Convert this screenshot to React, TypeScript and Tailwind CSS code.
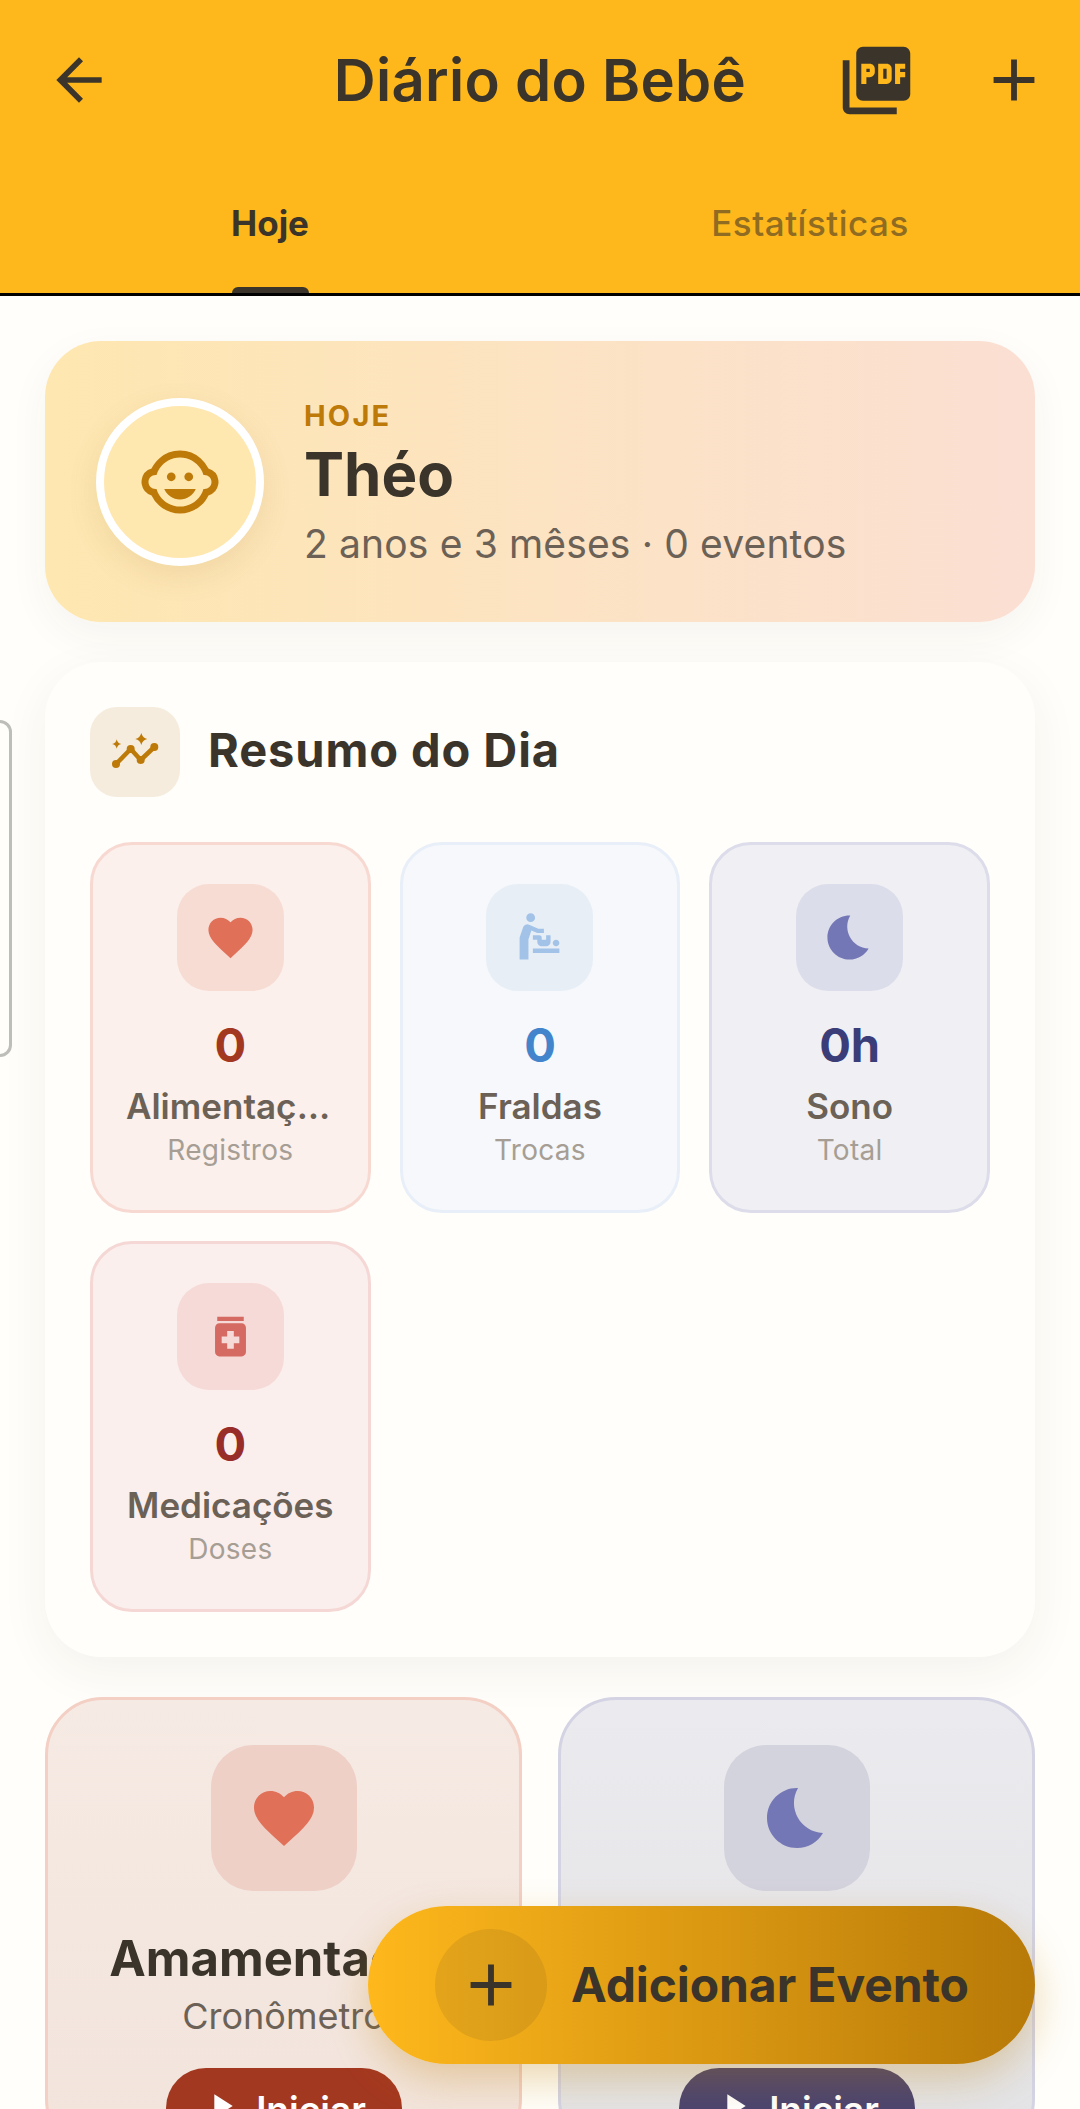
import React from "react";
import {
  MdArrowBack, MdAdd, MdPictureAsPdf, MdChildCare, MdFavorite,
  MdBabyChangingStation, MdBedtime, MdMedication, MdPlayArrow,
} from "react-icons/md";

function Stat({ icon, value, label, sub, box, tile, valueCls }: any) {
  return (
    <div className={`h-[371px] rounded-[42px] border-[3px] flex flex-col items-center pt-[39px] ${box}`}>
      <div className={`w-[107px] h-[107px] rounded-[32px] flex items-center justify-center ${tile}`}>{icon}</div>
      <div className={`mt-[19px] text-[47px] leading-[70px] font-bold ${valueCls}`}>{value}</div>
      <div className="mt-[1px] text-[35px] leading-[50px] font-semibold text-[#6B6156] w-full text-center truncate px-[33px]">{label}</div>
      <div className="text-[28px] leading-[38px] tracking-[0.3px] text-[#A69E94]">{sub}</div>
    </div>
  );
}

function Timer({ icon, title, sub, box, tile, btn }: any) {
  return (
    <div className={`h-[460px] rounded-[58px] border-[3px] flex flex-col items-center pt-[45px] ${box}`}>
      <div className={`w-[146px] h-[146px] rounded-[42px] flex items-center justify-center shrink-0 ${tile}`}>{icon}</div>
      <div className="mt-[34px] text-[49px] leading-[68px] font-bold text-[#3A342B] whitespace-nowrap">{title}</div>
      <div className="mt-[-1px] text-[36px] leading-[48px] text-[#6B6156]">{sub}</div>
      <div className={`mt-[28px] w-[236px] h-[80px] rounded-[40px] flex items-start pt-[14px] justify-center gap-[15px] text-white text-[37px] font-semibold shrink-0 ${btn}`}>
        <MdPlayArrow size={40} color="#fff" className="mt-[4px]" />
        <span>Iniciar</span>
      </div>
    </div>
  );
}

export default function App() {
  return (
    <div className="relative w-[1080px] h-[2109px] overflow-hidden bg-[#FFFEFA] font-['Inter','Noto_Sans',sans-serif]">
      <header className="relative h-[296px] bg-[#FEB81C] border-b-[3px] border-black text-[#3A342B]">
        <div className="h-[160px] grid grid-cols-[1fr_auto_1fr] items-center px-[45px]">
          <MdArrowBack size={68} color="#3A342B" />
          <h1 className="text-center text-[58px] font-semibold tracking-[0.3px]">Diário do Bebê</h1>
          <div className="flex items-center justify-end -mr-[14px]">
            <MdPictureAsPdf size={81} color="#3A342B" className="mr-[62px]" />
            <MdAdd size={70} color="#3A342B" />
          </div>
        </div>
        <div className="grid grid-cols-2 h-[133px] text-[35px] -mt-[3px]">
          <div className="flex items-center justify-center font-bold">Hoje</div>
          <div className="flex items-center justify-center font-medium tracking-[0.5px] text-[#8F6C21]">Estatísticas</div>
        </div>
        <div className="absolute left-[232px] bottom-0 w-[77px] h-[6px] rounded-t-[9px] bg-[#3A342B]" />
      </header>

      <main className="px-[45px] pt-[45px]">
        <section className="h-[281px] rounded-[56px] bg-gradient-to-r from-[#FEE7B0] to-[#FBDFD3] flex items-center pl-[51px] shadow-[0_14px_40px_rgba(60,50,30,0.05)]">
          <div className="w-[168px] h-[168px] rounded-full border-[8px] border-white bg-[#FFE7B0] flex items-center justify-center shadow-[0_10px_30px_rgba(150,110,30,0.12)] shrink-0">
            <MdChildCare size={84} color="#BD7A08" />
          </div>
          <div className="ml-[40px] pt-[5px]">
            <div className="text-[29px] leading-[38px] font-bold tracking-[2.2px] text-[#BD7A08]">HOJE</div>
            <div className="text-[60px] leading-[72px] font-bold text-[#3A342B] mt-[3px]">Théo</div>
            <div className="text-[39px] leading-[56px] tracking-[0.15px] text-[#6B6156] mt-[6px]">2 anos e 3 mêses · 0 eventos</div>
          </div>
        </section>

        <section className="mt-[40px] h-[995px] rounded-[56px] bg-[#FFFEFA] p-[45px] shadow-[0_14px_50px_rgba(60,50,30,0.06)]">
          <div className="flex items-center h-[90px]">
            <div className="w-[90px] h-[90px] rounded-[27px] bg-[#F5ECDD] shrink-0">
              <svg width="90" height="90" viewBox="0 0 90 90">
                <polyline points="26,57 40.7,42 50.7,53 64.3,40" fill="none" stroke="#BD7A08" strokeWidth="4.5" strokeLinejoin="round" strokeLinecap="round" />
                <circle cx="26" cy="57" r="4" fill="#BD7A08" />
                <circle cx="40.7" cy="42" r="4" fill="#BD7A08" />
                <circle cx="50.7" cy="53" r="4" fill="#BD7A08" />
                <circle cx="64.3" cy="40" r="4" fill="#BD7A08" />
                <path d="M51.3 26 Q52.5 30.8 57.3 32 Q52.5 33.2 51.3 38 Q50.1 33.2 45.3 32 Q50.1 30.8 51.3 26Z" fill="#BD7A08" />
                <path d="M26.7 32.3 Q27.4 36.3 31.4 37 Q27.4 37.7 26.7 41.7 Q26 37.7 22 37 Q26 36.3 26.7 32.3Z" fill="#BD7A08" />
              </svg>
            </div>
            <h2 className="ml-[28px] -mt-[3px] text-[47px] tracking-[0.9px] font-bold text-[#3A342B]">Resumo do Dia</h2>
          </div>
          <div className="mt-[45px] grid grid-cols-3 gap-x-[29px] gap-y-[28px]">
            <Stat box="bg-[#FBF0EC] border-[#F8D9D2]" tile="bg-[#F7DCD4]" valueCls="text-[#A33820]" value="0" label="Alimentação" sub="Registros" icon={<MdFavorite size={53} color="#E07058" />} />
            <Stat box="bg-[#F6F8FB] border-[#E8EFF8]" tile="bg-[#E7EEF6]" valueCls="text-[#4285CC]" value="0" label="Fraldas" sub="Trocas" icon={<MdBabyChangingStation size={53} color="#A2C3E7" />} />
            <Stat box="bg-[#F0F0F4] border-[#DCDCEA]" tile="bg-[#DCDDEB]" valueCls="text-[#3A3D78]" value="0h" label="Sono" sub="Total" icon={<MdBedtime size={53} color="#7477B5" />} />
            <Stat box="bg-[#FAEFED] border-[#F5D8D5]" tile="bg-[#F6DAD7]" valueCls="text-[#982C28]" value="0" label="Medicações" sub="Doses" icon={<MdMedication size={53} color="#D46A62" />} />
          </div>
        </section>

        <section className="mt-[40px] grid grid-cols-2 gap-x-[36px]">
          <Timer box="bg-gradient-to-b from-[#F6EAE4] to-[#F2E4DB] border-[#F3CFC4]" tile="bg-[#EED0C7]" btn="bg-[#A33820]" title="Amamentação" sub="Cronômetro" icon={<MdFavorite size={72} color="#E07058" />} />
          <Timer box="bg-gradient-to-b from-[#EBEAEE] to-[#E3E3E5] border-[#D3D3E4]" tile="bg-[#D3D3DE]" btn="bg-[#4B4470]" title="Sono" sub="Cronômetro" icon={<MdBedtime size={72} color="#7477B5" />} />
        </section>
      </main>

      <div className="absolute left-[-20px] top-[720px] w-[32px] h-[337px] rounded-[12px] border-[3px] border-[#BDBDB9] bg-[#FFFEFA]" />

      <button className="absolute left-[368px] top-[1906px] w-[667px] h-[158px] rounded-[79px] bg-gradient-to-r from-[#FEB81C] to-[#B87A08] flex items-center pl-[67px] shadow-[0_16px_40px_rgba(190,125,10,0.3)]">
        <span className="w-[112px] h-[112px] rounded-full bg-[#3A342B]/10 flex items-center justify-center shrink-0">
          <MdAdd size={70} color="#3A342B" />
        </span>
        <span className="ml-[24px] text-[48px] tracking-[-0.1px] font-bold text-[#3A342B] whitespace-nowrap">Adicionar Evento</span>
      </button>
    </div>
  );
}
